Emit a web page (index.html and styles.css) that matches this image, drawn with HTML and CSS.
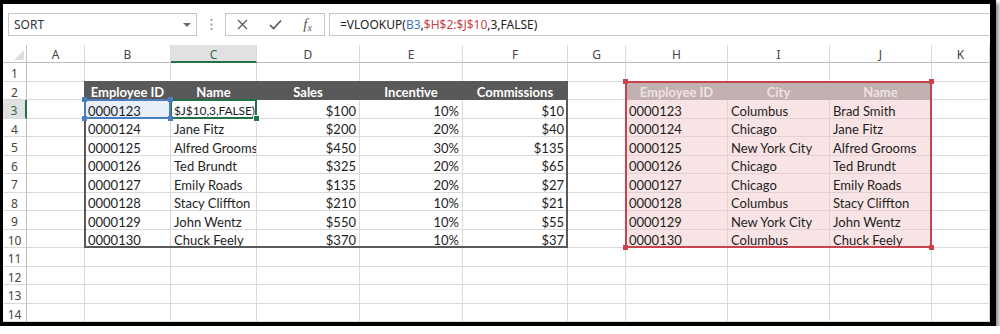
FILE: index.html
```html
<!DOCTYPE html>
<html lang="en">
<head>
    <meta charset="UTF-8">
    <title>VLOOKUP</title>
    <link rel="stylesheet" href="styles.css">
</head>
<body>

<div class="frame">
    <div class="toolbar">
        <div class="name-box">
            <span>SORT</span>
            <svg width="8" height="4" viewBox="0 0 8 4"><polygon points="0,0 8,0 4,4" fill="#6a6a6a"/></svg>
        </div>
        <div class="grip">
            <svg width="3" height="11" viewBox="0 0 3 11">
                <rect x="0.5" y="0" width="2" height="2" fill="#a0a0a0"/>
                <rect x="0.5" y="4.5" width="2" height="2" fill="#a0a0a0"/>
                <rect x="0.5" y="9" width="2" height="2" fill="#a0a0a0"/>
            </svg>
        </div>
        <div class="fx-buttons">
            <span>
                <svg width="11" height="11" viewBox="0 0 11 11"><path d="M1 1 L10 10 M10 1 L1 10" stroke="#5a5a5a" stroke-width="1.3" fill="none"/></svg>
            </span>
            <span>
                <svg width="13" height="11" viewBox="0 0 13 11"><path d="M1 6 L4.5 9.5 L12 1.5" stroke="#5a5a5a" stroke-width="1.7" fill="none"/></svg>
            </span>
            <span class="fx-label">f<small>x</small></span>
        </div>
        <div class="formula">=VLOOKUP(<span class="ref-blue">B3</span>,<span class="ref-red">$H$2:$J$10</span>,3,FALSE)</div>
    </div>

    <div class="sheet-wrap">
        <div class="sheet" id="sheet"></div>
        <div class="overlay">
            <div class="rng rng-table"></div>
            <div class="rng rng-red">
                <i class="h tl"></i><i class="h tr"></i><i class="h bl"></i><i class="h br"></i>
            </div>
            <div class="rng rng-green"><i class="fill"></i></div>
            <div class="rng rng-blue">
                <i class="h tl"></i><i class="h tr"></i><i class="h bl"></i><i class="h br"></i>
            </div>
        </div>
    </div>
</div>

<script>
    const colNames = ['A', 'B', 'C', 'D', 'E', 'F', 'G', 'H', 'I', 'J', 'K'];
    const leftHead = ['Employee ID', 'Name', 'Sales', 'Incentive', 'Commissions'];
    const rightHead = ['Employee ID', 'City', 'Name'];

    const leftRows = [
        ['0000123', '$J$10,3,FALSE)', '$100', '10%', '$10'],
        ['0000124', 'Jane Fitz', '$200', '20%', '$40'],
        ['0000125', 'Alfred Grooms', '$450', '30%', '$135'],
        ['0000126', 'Ted Brundt', '$325', '20%', '$65'],
        ['0000127', 'Emily Roads', '$135', '20%', '$27'],
        ['0000128', 'Stacy Cliffton', '$210', '10%', '$21'],
        ['0000129', 'John Wentz', '$550', '10%', '$55'],
        ['0000130', 'Chuck Feely', '$370', '10%', '$37']
    ];

    const rightRows = [
        ['0000123', 'Columbus', 'Brad Smith'],
        ['0000124', 'Chicago', 'Jane Fitz'],
        ['0000125', 'New York City', 'Alfred Grooms'],
        ['0000126', 'Chicago', 'Ted Brundt'],
        ['0000127', 'Chicago', 'Emily Roads'],
        ['0000128', 'Columbus', 'Stacy Cliffton'],
        ['0000129', 'New York City', 'John Wentz'],
        ['0000130', 'Columbus', 'Chuck Feely']
    ];

    const sheet = document.getElementById('sheet');

    for (let r = 0; r <= 14; r++) {
        for (let c = 0; c <= 11; c++) {
            const cell = document.createElement('div');
            cell.className = 'cell';
            let text = '';

            if (r === 0 && c === 0) {
                cell.classList.add('corner');
                cell.innerHTML = '<svg width="10" height="10" viewBox="0 0 10 10"><polygon points="10,0 10,10 0,10" fill="#dedede"/></svg>';
            } else if (r === 0) {
                cell.classList.add('col-head');
                if (c === 3) cell.classList.add('active');
                text = colNames[c - 1];
            } else if (c === 0) {
                cell.classList.add('row-head');
                if (r === 3) cell.classList.add('active');
                text = r;
            } else {
                // c: 1 = A, 2 = B ... 11 = K
                if (r === 2 && c >= 2 && c <= 6) {
                    cell.classList.add('dark-head');
                    text = leftHead[c - 2];
                }
                if (r === 2 && c >= 8 && c <= 10) {
                    cell.classList.add('pink-head');
                    text = rightHead[c - 8];
                }
                if (r >= 3 && r <= 10 && c >= 2 && c <= 6) {
                    text = leftRows[r - 3][c - 2];
                    if (c >= 4) cell.classList.add('num');
                }
                if (r >= 3 && r <= 10 && c >= 8 && c <= 10) {
                    cell.classList.add('pink');
                    text = rightRows[r - 3][c - 8];
                }
                if (r === 3 && c === 2) cell.classList.add('ref-cell');
                if (r === 3 && c === 3) cell.classList.add('editing');
            }

            if (text !== '') cell.textContent = text;
            sheet.appendChild(cell);
        }
    }
</script>

</body>
</html>
```

FILE: styles.css
```css
body {
    margin: 0;
    background-color: #fff;
    font-family: "Lato", "Liberation Sans", sans-serif;
}

.frame {
    width: 987px;
    height: 318px;
    border-style: solid;
    border-color: #000;
    border-width: 4px 6px 4px 3px;
    box-shadow: 3px 3px 4px rgba(0, 0, 0, 0.45);
    background-color: #fff;
    overflow: hidden;
}

/* formula bar */
.toolbar {
    display: flex;
    align-items: flex-start;
    height: 41px;
    box-sizing: border-box;
    padding: 9px 0 0 5px;
}

.name-box {
    width: 189px;
    height: 23px;
    box-sizing: border-box;
    border: 1px solid #c6c6c6;
    display: flex;
    align-items: center;
    justify-content: space-between;
    padding: 0 5px 0 5px;
    font-family: "Noto Sans", sans-serif;
    font-size: 12px;
    color: #333;
}

.grip {
    width: 28px;
    height: 23px;
    display: flex;
    align-items: center;
    justify-content: center;
}

.fx-buttons {
    display: flex;
    width: 100px;
    height: 23px;
    box-sizing: border-box;
    border: 1px solid #c6c6c6;
    margin-right: 4px;
}

.fx-buttons span {
    flex: 1;
    display: flex;
    align-items: center;
    justify-content: center;
}

.fx-label {
    font-family: "Liberation Serif", serif;
    font-style: italic;
    font-size: 15px;
    color: #555;
}

.fx-label small {
    font-size: 10px;
    margin-top: 5px;
}

.formula {
    flex: 1;
    height: 23px;
    box-sizing: border-box;
    border: 1px solid #c6c6c6;
    border-right: none;
    padding-left: 10px;
    display: flex;
    align-items: center;
    font-family: "Noto Sans", sans-serif;
    font-size: 12px;
    color: #222;
    white-space: pre;
}

.ref-blue {
    color: #3f74c0;
}

.ref-red {
    color: #c8434b;
}

/* grid */
.sheet-wrap {
    position: relative;
}

.sheet,
.overlay {
    display: grid;
    grid-template-columns: 24px 58px 86px 86px 103px 103px 105px 58px 102px 102px 102px 58px;
    grid-template-rows: 18px repeat(14, 18.5px);
}

.cell {
    border-right: 1px solid #dadada;
    border-bottom: 1px solid #dadada;
    padding: 4px 3px 0 3px;
    display: flex;
    align-items: center;
    white-space: nowrap;
    overflow: hidden;
    min-width: 0;
    font-size: 13px;
    color: #1e1e1e;
}

.corner {
    justify-content: flex-end;
    align-items: flex-end;
    padding: 0 2px 2px 0;
    border-right-color: #c4c4c4;
    border-bottom-color: #bdbdbd;
}

.col-head,
.row-head {
    justify-content: center;
    font-family: "Noto Sans", sans-serif;
    font-size: 12px;
    color: #444;
}

.col-head {
    border-bottom-color: #bdbdbd;
    padding-top: 2px;
}

.row-head {
    border-right-color: #bdbdbd;
    padding-left: 0;
    padding-right: 0;
}

.col-head.active {
    background-color: #e1e1e1;
    color: #217346;
    border-bottom: 2px solid #217346;
}

.row-head.active {
    background-color: #e1e1e1;
    color: #217346;
    border-right: 2px solid #217346;
}

.dark-head {
    background-color: #595959;
    border-color: #595959;
    color: #fff;
    font-weight: bold;
    justify-content: center;
}

.num {
    justify-content: flex-end;
}

.editing {
    font-size: 12px;
    letter-spacing: -0.1px;
    padding-left: 3px;
    padding-right: 2px;
}

.pink-head {
    background-color: #c3b1b1;
    border-color: #c3b1b1;
    color: #eee2e2;
    font-weight: bold;
    justify-content: center;
}

.pink {
    background-color: #f8e4e4;
    border-color: #e3d0d0;
}

.ref-cell {
    background-color: #e8eff9;
}

/* range highlights over the grid */
.overlay {
    position: absolute;
    top: 0;
    left: 0;
    right: 0;
    bottom: 0;
    pointer-events: none;
}

.rng {
    position: relative;
    margin: -1px 0 0 -1px;
    border: 2px solid;
}

.rng-table {
    grid-column: 3 / 8;
    grid-row: 3 / 12;
    border-color: #595959;
}

.rng-red {
    grid-column: 9 / 12;
    grid-row: 3 / 12;
    border-color: #c8434b;
    color: #c8434b;
}

.rng-green {
    grid-column: 4 / 5;
    grid-row: 4 / 5;
    border-color: #217346;
}

.rng-blue {
    grid-column: 3 / 4;
    grid-row: 4 / 5;
    border-color: #4a7dc4;
    color: #4a7dc4;
}

.h {
    position: absolute;
    width: 5px;
    height: 5px;
    background-color: currentColor;
}

.h.tl { left: -4px; top: -4px; }
.h.tr { right: -4px; top: -4px; }
.h.bl { left: -4px; bottom: -4px; }
.h.br { right: -4px; bottom: -4px; }

.fill {
    position: absolute;
    right: -5px;
    bottom: -5px;
    width: 5px;
    height: 5px;
    background-color: #217346;
    border: 1px solid #fff;
}
```
